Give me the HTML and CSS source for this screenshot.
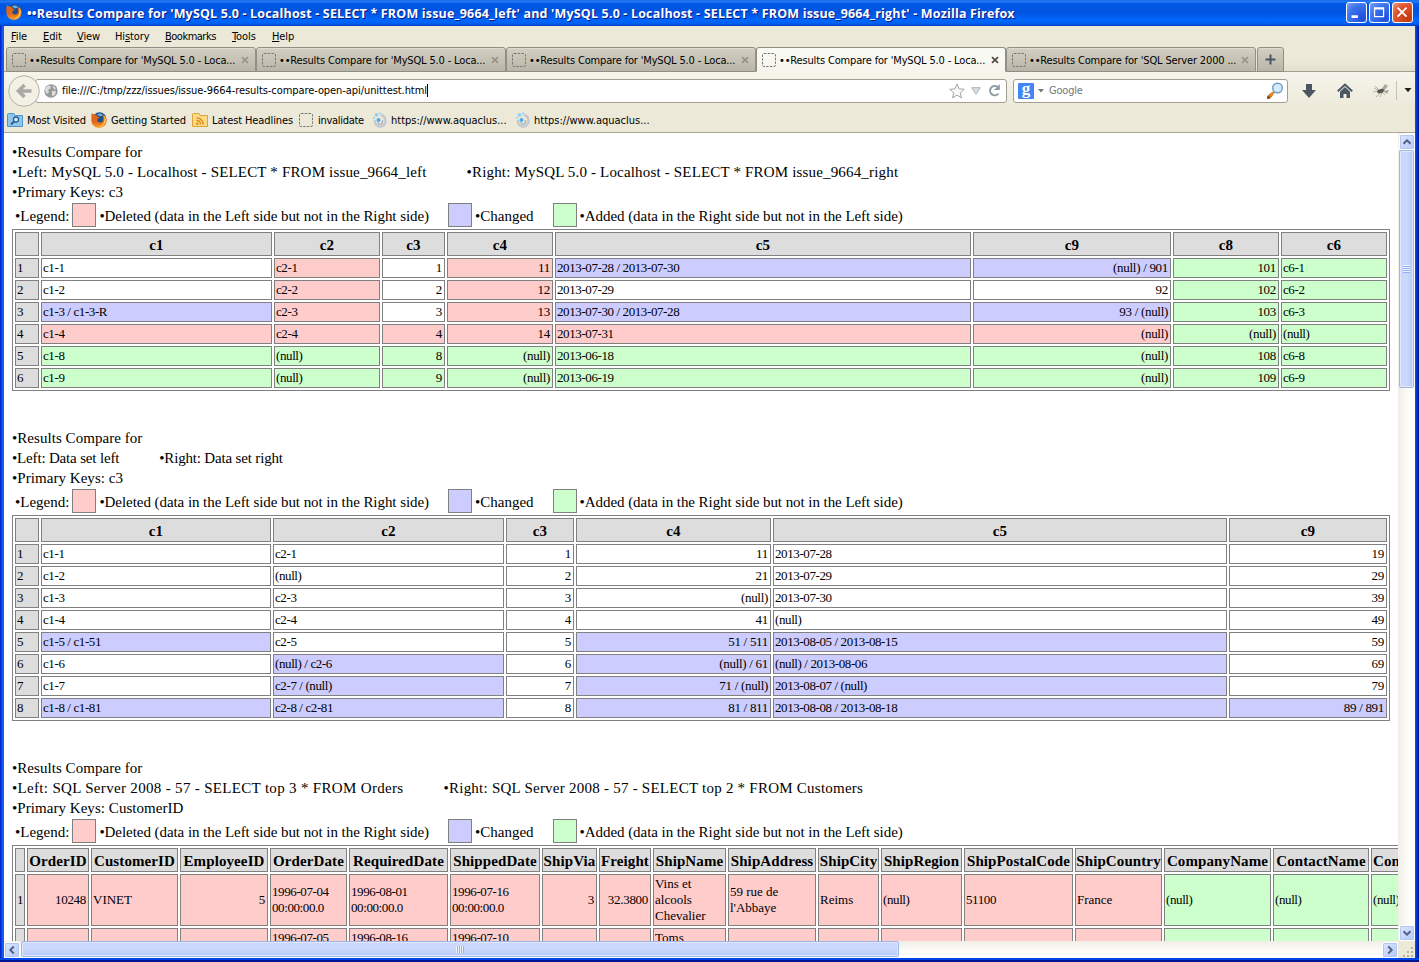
FILE: index.html
```html
<!DOCTYPE html>
<html lang="en">
<head>
<meta charset="utf-8">
<title>Results Compare</title>
<link rel="stylesheet" href="styles.css">
</head>
<body>
<svg class="defs" width="0" height="0" aria-hidden="true">
  <linearGradient id="fox" x1="0" y1="0" x2="0" y2="1"><stop offset="0" stop-color="#d9691c"/><stop offset=".6" stop-color="#e2661a"/><stop offset="1" stop-color="#f9a52c"/></linearGradient>
  <symbol id="firefox" viewBox="0 0 16 16">
    <circle cx="8.5" cy="7" r="6.8" fill="#1d4f8f"/>
    <path d="M6 2.5Q9 .5 12 3Q10 5 8 4Z" fill="#62b3e8"/>
    <path d="M.8 1Q2 2.5 4 2.4Q6 2.5 6.2 4.2L8.5 5.5Q7 7 6.2 7.5Q6 10.4 9.4 10.5Q12.6 10 12.2 6.5Q12 4 11 2.6Q16 4.500 15.700 8.800Q15 15.600 8 15.900Q1 15.300.3 8.500Q.2 3.500.8 1Z" fill="url(#fox)"/>
    <path d="M13.200 3.500Q16 7 14.200 11Q12 14.500 8 14.700Q12.500 12.500 13.300 9Q13.800 6 13.200 3.500Z" fill="#ffd34a"/>
  </symbol>
  <symbol id="blank" viewBox="0 0 14 14"><rect x=".5" y=".5" width="13" height="13" rx="1.500" fill="none" stroke="#777" stroke-dasharray="2.500 1.200"/></symbol>
  <symbol id="close" viewBox="0 0 8 8"><path d="M1 1.200L7 6.800M7 1.200L1 6.800" stroke="currentColor" stroke-width="1.700"/></symbol>
  <symbol id="aqua" viewBox="0 0 16 16">
    <path d="M9 3Q14 4.500 13.500 10Q11.500 15.500 7 14.500Q2.500 13 3 8" fill="none" stroke="#c3c9cf" stroke-width="2.400"/>
    <path d="M6 10Q6 13 9 12Q11 11 10.500 8" fill="none" stroke="#a8b2ba" stroke-width="1.300"/>
    <circle cx="6.500" cy="8" r="2" fill="#49aef0"/><circle cx="4.500" cy="3" r="1.800" fill="#8dccf5"/><circle cx="2" cy="6" r="1.200" fill="#a9d8f5"/><circle cx="8" cy="1.500" r="1" fill="#8dccf5"/>
  </symbol>
</svg>
<div class="window">
  <div class="titlebar">
    <svg class="logo"><use href="#firefox"/></svg>
    <span class="title">••Results Compare for 'MySQL 5.0 - Localhost - SELECT * FROM issue_9664_left' and 'MySQL 5.0 - Localhost - SELECT * FROM issue_9664_right' - Mozilla Firefox</span>
    <div class="controls">
      <svg class="ctl" viewBox="0 0 21 21"><path d="M5 15h7" stroke="#fff" stroke-width="3"/></svg>
      <svg class="ctl" viewBox="0 0 21 21"><path d="M5 5.500h10V15H5Z M5 6.500h10" fill="none" stroke="#fff" stroke-width="1.400"/></svg>
      <svg class="ctl exit" viewBox="0 0 21 21"><path d="M5 5L15 15M15 5L5 15" stroke="#fff" stroke-width="2"/></svg>
    </div>
  </div>
  <div class="body">
    <div class="menu"><span><u>F</u>ile</span><span><u>E</u>dit</span><span><u>V</u>iew</span><span>Hi<u>s</u>tory</span><span><u>B</u>ookmarks</span><span><u>T</u>ools</span><span><u>H</u>elp</span></div>
    <div class="tabs">
      <div class="tab"><svg class="doc"><use href="#blank"/></svg><span>••Results Compare for 'MySQL 5.0 - Loca...</span><svg class="x"><use href="#close"/></svg></div>
      <div class="tab"><svg class="doc"><use href="#blank"/></svg><span>••Results Compare for 'MySQL 5.0 - Loca...</span><svg class="x"><use href="#close"/></svg></div>
      <div class="tab"><svg class="doc"><use href="#blank"/></svg><span>••Results Compare for 'MySQL 5.0 - Loca...</span><svg class="x"><use href="#close"/></svg></div>
      <div class="tab active"><svg class="doc"><use href="#blank"/></svg><span>••Results Compare for 'MySQL 5.0 - Loca...</span><svg class="x"><use href="#close"/></svg></div>
      <div class="tab"><svg class="doc"><use href="#blank"/></svg><span>••Results Compare for 'SQL Server 2000 ...</span><svg class="x"><use href="#close"/></svg></div>
      <div class="tab plus"><svg width="11" height="11" viewBox="0 0 11 11"><path d="M5.500 .5v10M.5 5.500h10" stroke="#4b5663" stroke-width="2"/></svg></div>
    </div>
    <div class="nav">
      <svg class="back" viewBox="0 0 32 32"><circle cx="16" cy="16" r="15.300" fill="#f3f1e6" stroke="#b4b1a6"/><path d="M23.500 16H11M16.500 10L10.500 16l6 6" fill="none" stroke="#a9a9a6" stroke-width="3.600"/></svg>
      <div class="url">
        <svg width="14" height="14" viewBox="0 0 14 14"><circle cx="7" cy="7" r="6.700" fill="#999"/><path d="M1 5Q3 1 6 1.500L7 4L4 6L5 8L3 10Q1 8 1 5ZM8 2l3 1 1 3-2-1ZM8 7l4 0-1 4-3 1Z" fill="#ddd"/></svg>
        <span class="addr">file:///C:/tmp/zzz/issues/issue-9664-results-compare-open-api/unittest.html</span><i class="cursor"></i>
        <svg class="star" width="16" height="16" viewBox="0 0 16 16"><path d="M8 1l2.100 4.800 5.200.5-4 3.500 1.200 5.100L8 12.200l-4.500 2.700 1.200-5.100-4-3.500 5.200-.5Z" fill="#f8f8f8" stroke="#a5a5a5"/></svg>
        <svg class="drop" width="10" height="8" viewBox="0 0 10 8"><path d="M.7.700h8.600L5 7.200Z" fill="#d8dde2" stroke="#abb4bc"/></svg>
        <svg class="reload" width="13" height="13" viewBox="0 0 13 13"><path d="M10.500 9.500A4.700 4.700 0 1 1 9.500 2.800" fill="none" stroke="#8f9ba5" stroke-width="2"/><path d="M11.800 0v6H6Z" fill="#8f9ba5"/></svg>
      </div>
      <div class="search">
        <b class="g">g</b>
        <svg width="6" height="4" viewBox="0 0 6 4"><path d="M0 0h6L3 3.500Z" fill="#777"/></svg>
        <span>Google</span>
        <svg class="lens" width="17" height="17" viewBox="0 0 17 17"><path d="M1.500 15.500L4 13" stroke="#9c4c10" stroke-width="3.200" stroke-linecap="round"/><path d="M2.500 14.300L7 10" stroke="#e98722" stroke-width="2.600"/><circle cx="10.500" cy="6" r="4.800" fill="#d3ecfc" stroke="#6d9bc8" stroke-width="1.400"/></svg>
      </div>
      <svg class="dl" width="14" height="14" viewBox="0 0 14 14"><path d="M4 0h6v6h4L7 14 0 6h4Z" fill="#4b5663"/></svg>
      <svg class="home" width="16" height="15" viewBox="0 0 16 15"><path d="M.8 8.200L8 1.500l7.200 6.700" fill="none" stroke="#4b5663" stroke-width="2"/><path d="M3 8.700L8 4l5 4.700V15H9.500v-4h-3v4H3Z" fill="#4b5663"/></svg>
      <svg class="fly" width="16" height="14" viewBox="0 0 16 14"><path d="M1 4l4 2M0 8l5-1M3 13l4-4M7 13l2-4M12 11l-3-3M2 2l4 4" stroke="#a5a5a0" stroke-width=".8"/><path d="M8 6L12 0 15 2 11 7ZM10 7l6-1-2 4Z" fill="#a9a9a3"/><ellipse cx="7.500" cy="7" rx="3.500" ry="2" transform="rotate(-20 8 7)" fill="#55554f"/></svg>
      <svg class="more" width="8" height="5" viewBox="0 0 8 5"><path d="M.5 0h7L4 4.300Z" fill="#222"/></svg>
    </div>
    <div class="marks">
      <span><svg viewBox="0 0 16 16"><path d="M.5 2.500Q.5 1.500 1.500 1.500H7l1 2h7.500V14.500H.5Z" fill="#8fc6ec" stroke="#4d94c9"/><circle cx="9" cy="7.500" r="2.500" fill="#d9effc" stroke="#28608f" stroke-width="1.300"/><path d="M7 9.500L4 12.500" stroke="#28608f" stroke-width="1.800"/></svg>Most Visited</span>
      <span><svg viewBox="0 0 16 16"><use href="#firefox"/></svg>Getting Started</span>
      <span><svg viewBox="0 0 16 16"><path d="M.5 2.500Q.5 1.500 1.500 1.500H7l1 2h7.500V14.500H.5Z" fill="#fbdc85" stroke="#dba43a"/><path d="M4.500 8.500Q8.500 8.500 8.500 12.500M4.500 6Q11 6 11 12.500" fill="none" stroke="#e08a1b" stroke-width="1.400"/><circle cx="5.300" cy="11.700" r="1.200" fill="#e08a1b"/></svg>Latest Headlines</span>
      <span><svg viewBox="-1 -1 16 16"><use href="#blank" width="14" height="14"/></svg>invalidate</span>
      <span><svg viewBox="0 0 16 16"><use href="#aqua"/></svg>https://www.aquaclus...</span>
      <span><svg viewBox="0 0 16 16"><use href="#aqua"/></svg>https://www.aquaclus...</span>
    </div>
    <div class="view">
      <main class="page">
        <section>
          <p>•Results Compare for</p>
          <p class="query"><span class="left">•Left: MySQL 5.0 - Localhost - SELECT * FROM issue_9664_left</span>•Right: MySQL 5.0 - Localhost - SELECT * FROM issue_9664_right</p>
          <p>•Primary Keys: c3</p>
          <div class="legend"><span>•Legend:</span><i class="d"></i><span class="long">•Deleted (data in the Left side but not in the Right side)</span><i class="c"></i><span>•Changed</span><i class="a"></i><span class="long">•Added (data in the Right side but not in the Left side)</span></div>
          <table class="t1">
            <colgroup><col><col><col><col><col><col><col><col><col></colgroup>
            <tr><th><th>c1<th>c2<th>c3<th>c4<th>c5<th>c9<th>c8<th>c6
            <tr><th>1<td>c1-1<td class="d">c2-1<td class="n">1<td class="n d">11<td class="c">2013-07-28 / 2013-07-30<td class="n c">(null) / 901<td class="n a">101<td class="a">c6-1
            <tr><th>2<td>c1-2<td class="d">c2-2<td class="n">2<td class="n d">12<td>2013-07-29<td class="n">92<td class="n a">102<td class="a">c6-2
            <tr><th>3<td class="c">c1-3 / c1-3-R<td class="d">c2-3<td class="n">3<td class="n d">13<td class="c">2013-07-30 / 2013-07-28<td class="n c">93 / (null)<td class="n a">103<td class="a">c6-3
            <tr><th>4<td class="d">c1-4<td class="d">c2-4<td class="n d">4<td class="n d">14<td class="d">2013-07-31<td class="n d">(null)<td class="n a">(null)<td class="a">(null)
            <tr class="a"><th>5<td>c1-8<td>(null)<td class="n">8<td class="n">(null)<td>2013-06-18<td class="n">(null)<td class="n">108<td>c6-8
            <tr class="a"><th>6<td>c1-9<td>(null)<td class="n">9<td class="n">(null)<td>2013-06-19<td class="n">(null)<td class="n">109<td>c6-9
          </table>
        </section>
        <section>
          <p>•Results Compare for</p>
          <p class="query short"><span class="left">•Left: Data set left</span>•Right: Data set right</p>
          <p>•Primary Keys: c3</p>
          <div class="legend"><span>•Legend:</span><i class="d"></i><span class="long">•Deleted (data in the Left side but not in the Right side)</span><i class="c"></i><span>•Changed</span><i class="a"></i><span class="long">•Added (data in the Right side but not in the Left side)</span></div>
          <table class="t2">
            <colgroup><col><col><col><col><col><col><col></colgroup>
            <tr><th><th>c1<th>c2<th>c3<th>c4<th>c5<th>c9
            <tr><th>1<td>c1-1<td>c2-1<td class="n">1<td class="n">11<td>2013-07-28<td class="n">19
            <tr><th>2<td>c1-2<td>(null)<td class="n">2<td class="n">21<td>2013-07-29<td class="n">29
            <tr><th>3<td>c1-3<td>c2-3<td class="n">3<td class="n">(null)<td>2013-07-30<td class="n">39
            <tr><th>4<td>c1-4<td>c2-4<td class="n">4<td class="n">41<td>(null)<td class="n">49
            <tr><th>5<td class="c">c1-5 / c1-51<td>c2-5<td class="n">5<td class="n c">51 / 511<td class="c">2013-08-05 / 2013-08-15<td class="n">59
            <tr><th>6<td>c1-6<td class="c">(null) / c2-6<td class="n">6<td class="n c">(null) / 61<td class="c">(null) / 2013-08-06<td class="n">69
            <tr><th>7<td>c1-7<td class="c">c2-7 / (null)<td class="n">7<td class="n c">71 / (null)<td class="c">2013-08-07 / (null)<td class="n">79
            <tr><th>8<td class="c">c1-8 / c1-81<td class="c">c2-8 / c2-81<td class="n">8<td class="n c">81 / 811<td class="c">2013-08-08 / 2013-08-18<td class="n c">89 / 891
          </table>
        </section>
        <section>
          <p>•Results Compare for</p>
          <p class="query wide"><span class="left">•Left: SQL Server 2008 - 57 - SELECT top 3 * FROM Orders</span>•Right: SQL Server 2008 - 57 - SELECT top 2 * FROM Customers</p>
          <p>•Primary Keys: CustomerID</p>
          <div class="legend"><span>•Legend:</span><i class="d"></i><span class="long">•Deleted (data in the Left side but not in the Right side)</span><i class="c"></i><span>•Changed</span><i class="a"></i><span class="long">•Added (data in the Right side but not in the Left side)</span></div>
          <table class="t3">
            <colgroup><col><col><col><col><col><col><col><col><col><col><col><col><col><col><col><col><col><col></colgroup>
            <tr><th><th>OrderID<th>CustomerID<th>EmployeeID<th>OrderDate<th>RequiredDate<th>ShippedDate<th>ShipVia<th>Freight<th>ShipName<th>ShipAddress<th>ShipCity<th>ShipRegion<th>ShipPostalCode<th>ShipCountry<th>CompanyName<th>ContactName<th class="cut">Con
            <tr class="d"><th>1<td class="n">10248<td class="w">VINET<td class="n">5<td>1996-07-04<br>00:00:00.0<td>1996-08-01<br>00:00:00.0<td>1996-07-16<br>00:00:00.0<td class="n">3<td class="n">32.3800<td class="w">Vins et<br>alcools<br>Chevalier<td class="w">59 rue de<br>l'Abbaye<td class="w">Reims<td>(null)<td>51100<td class="w">France<td class="a">(null)<td class="a">(null)<td class="a">(null)
            <tr class="d next"><th><td><td><td><td>1996-07-05<td>1996-08-16<td>1996-07-10<td><td><td class="w">Toms<td><td><td><td><td><td class="a"><td class="a"><td class="a">
          </table>
        </section>
      </main>
      <div class="vbar">
        <svg class="sb" viewBox="0 0 16 16"><path d="M4 10L8 6l4 4" fill="none" stroke="#4d6185" stroke-width="2.200"/></svg>
        <div class="thumb"><i></i></div>
        <svg class="sb end" viewBox="0 0 16 16"><path d="M4 6l4 4 4-4" fill="none" stroke="#4d6185" stroke-width="2.200"/></svg>
      </div>
    </div>
    <div class="hbar">
      <svg class="sb" viewBox="0 0 16 16"><path d="M10 4L6 8l4 4" fill="none" stroke="#4d6185" stroke-width="2.200"/></svg>
      <div class="thumb"><i></i></div>
      <svg class="sb end" viewBox="0 0 16 16"><path d="M6 4l4 4-4 4" fill="none" stroke="#4d6185" stroke-width="2.200"/></svg>
      <svg class="grip" viewBox="0 0 17 17"><path d="M13 6h2v2h-2zM9 10h2v2H9zM13 10h2v2h-2zM5 14h2v2H5zM9 14h2v2H9zM13 14h2v2h-2z" fill="#b8b4a2"/></svg>
    </div>
  </div>
</div>
</body>
</html>
```
FILE: styles.css
```css
* { box-sizing: border-box; }
body { margin: 0; overflow: hidden; font: 11px/14px "DejaVu Sans Condensed", "DejaVu Sans", sans-serif; color: #000; }
svg { flex: none; display: block; }
.defs { position: absolute; }
.window { width: 1419px; height: 962px; display: flex; flex-direction: column; background: linear-gradient(90deg, #0019cf 0, #0831d9 1px, #166aee 3px, #0855dd 4px, #0855dd 1415px, #0046e6 1416px, #001da0 1418px); padding-bottom: 4px; box-shadow: inset 0 -2px #001590, inset 0 -4px #0144e8; }
.titlebar { height: 26px; flex: none; display: flex; align-items: center; padding: 0 6px; background: linear-gradient(#0f5fdc 0, #2a7ff5 1px, #0058e6 4px, #0053e0 12px, #0066fb 20px, #0063f5 23px, #0041c4 26px); }
.logo { width: 16px; height: 16px; margin: -3px 5px 0 0; }
.title { font: bold 12.5px/16px "Open Sans", sans-serif; letter-spacing: .17px; padding-top: 1px; color: #fff; text-shadow: 1px 1px #0a1883; white-space: nowrap; }
.controls { display: flex; gap: 2px; margin-left: auto; margin-top: -1px; }
.ctl { width: 21px; height: 21px; border: 1px solid #fff; border-radius: 3px; background: radial-gradient(circle at 80% 80%, #1f4fdc, #3a72ec 60%, #7ea4f4); }
.ctl.exit { background: radial-gradient(circle at 80% 80%, #c43a10, #e0532f 60%, #f09a80); }
.body { flex: 1; min-height: 0; margin: 0 4px; display: flex; flex-direction: column; background: #ece9d8; }
.menu { height: 21px; flex: none; display: flex; align-items: center; padding-left: 7px; letter-spacing: -.1px; }
.menu u { text-underline-offset: 1px; }
.menu span:nth-child(1) { width: 32px; }
.menu span:nth-child(2) { width: 34px; }
.menu span:nth-child(3) { width: 38px; }
.menu span:nth-child(4) { width: 50px; }
.menu span:nth-child(5) { width: 67px; letter-spacing: -.5px; }
.menu span:nth-child(6) { width: 40px; }
.tabs { height: 25px; flex: none; display: flex; padding-left: 2px; border-bottom: 1px solid #a29f92; background: linear-gradient(#ece9d8 60%, #e2dfce); }
.tab { width: 250px; height: 25px; display: flex; align-items: center; padding: 1px 6px 0 5px; border: 1px solid #918f84; border-radius: 3px 3px 0 0; background: linear-gradient(#d3d0c2, #b9b6a9); box-shadow: inset 0 1px #dedbd0; white-space: nowrap; letter-spacing: -.16px; }
.tab span { padding-top: 2px; }
.tab.active { background: linear-gradient(#fafaf5, #f6f5ec); border-bottom-color: #f6f5ec; box-shadow: none; }
.tab.plus { width: 27px; margin-left: 1px; padding: 0; justify-content: center; }
.doc { width: 14px; height: 14px; margin-right: 3px; }
.x { width: 8px; height: 8px; margin-left: auto; color: #969488; }
.active .x { color: #4c4c48; }
.nav { height: 37px; flex: none; display: flex; align-items: center; padding-left: 4px; background: linear-gradient(#f6f5ec, #ece9d8); }
.back { width: 32px; height: 32px; z-index: 1; }
.url, .search { height: 24px; display: flex; align-items: center; background: #fff; border: 1px solid #a29f92; border-radius: 3px; }
.url { width: 972px; margin-left: -5px; padding: 0 5px 0 8px; }
.addr { margin-left: 4px; white-space: nowrap; letter-spacing: -.07px; }
.cursor { width: 1px; height: 13px; background: #000; }
.star { margin-left: auto; }
.drop { margin: 0 7px 0 6px; }
.search { width: 275px; margin-left: 6px; padding: 0 3px 0 4px; color: #777; }
.g { width: 16px; height: 16px; margin-right: 4px; background: #4285f4; color: #fff; border-radius: 1px; font: bold 17px/11px "Liberation Serif", serif; text-align: center; }
.search span { margin-left: 5px; padding-top: 1px; letter-spacing: -.2px; }
.lens { margin-left: auto; }
.dl { margin-left: 14px; }
.home { margin-left: 21px; }
.fly { margin-left: 20px; }
.more { margin-left: 7px; box-sizing: content-box; padding: 7px 0 7px 7px; border-left: 1px solid #c5c2b2; }
.marks { height: 24px; flex: none; display: flex; padding: 1px 0 0 3px; border-bottom: 1px solid #aca899; letter-spacing: -.1px; }
.marks span { display: flex; align-items: center; white-space: nowrap; }
.marks svg { width: 16px; height: 16px; margin: -2px 4px 0 0; }
.marks span:nth-child(1) { width: 84px; }
.marks span:nth-child(2) { width: 101px; }
.marks span:nth-child(3) { width: 106px; }
.marks span:nth-child(4) { width: 74px; letter-spacing: -.3px; }
.marks span:nth-child(5) { width: 143px; }
.marks span:nth-child(n+5) { letter-spacing: 0; }
.marks span:nth-child(n+5) svg { margin-right: 3px; }
.view { height: 808px; flex: none; display: flex; background: #fff; }
.page { width: 1394px; height: 808px; overflow: hidden; padding: 9px 0 0 8px; font: 15px/20px "Liberation Serif", serif; white-space: nowrap; }
section { margin-bottom: 37px; }
p { margin: 0; height: 20px; letter-spacing: .05px; }
.left { margin-right: 40px; }
.query { letter-spacing: .17px; }
.query.short { letter-spacing: -.17px; }
.query.wide { letter-spacing: .24px; }
.wide .left { letter-spacing: .32px; }
.legend { height: 27px; display: flex; align-items: center; padding: 0 0 1px 3px; }
.legend span { padding-top: 1px; }
.legend .long { letter-spacing: -.06px; }
.legend i { width: 24px; height: 24px; border: 1px solid #808080; margin: 0 3px; }
.legend i.c, .legend i.a { margin-left: 19px; }
table { table-layout: fixed; border: 1px solid #808080; border-spacing: 2px; width: 1378px; }
.t3 { width: 1462px; }
th, td { border: 1px solid #808080; padding: 1px; overflow: hidden; }
th { height: 24px; padding: 1px 0 0; background: #ddd; font-weight: bold; text-align: center; letter-spacing: .1px; }
td, tr + tr th { height: 20px; padding: 1px; font-size: 13px; line-height: 16px; font-weight: normal; text-align: left; letter-spacing: -.4px; }
td.w { letter-spacing: 0; }
td.n { padding-right: 2px; text-align: right; letter-spacing: -.3px; }
th.cut { text-align: left; padding-left: 1px; }
.next td { height: 36px; vertical-align: top; }
.d, tr.d td { background: #fcc; }
.c { background: #ccf; }
.a, tr.a td, tr.d td.a { background: #cfc; }
tr.a, tr.d { background: none; }
.t1 col:nth-child(1), .t2 col:nth-child(1) { width: 24px; }
.t1 col:nth-child(2) { width: 231px; }
.t1 col:nth-child(3), .t1 col:nth-child(5), .t1 col:nth-child(8), .t1 col:nth-child(9) { width: 106px; }
.t1 col:nth-child(4) { width: 63px; }
.t1 col:nth-child(6) { width: 416px; }
.t1 col:nth-child(7) { width: 198px; }
.t2 col:nth-child(2) { width: 230px; }
.t2 col:nth-child(3) { width: 231px; }
.t2 col:nth-child(4) { width: 68px; }
.t2 col:nth-child(5) { width: 195px; }
.t2 col:nth-child(6) { width: 454px; }
.t2 col:nth-child(7) { width: 158px; }
.t3 col:nth-child(1) { width: 10px; }
.t3 col:nth-child(2) { width: 62px; }
.t3 col:nth-child(3) { width: 87px; }
.t3 col:nth-child(4) { width: 88px; }
.t3 col:nth-child(5) { width: 77px; }
.t3 col:nth-child(6) { width: 99px; }
.t3 col:nth-child(7) { width: 90px; }
.t3 col:nth-child(8) { width: 55px; }
.t3 col:nth-child(9) { width: 52px; }
.t3 col:nth-child(10) { width: 73px; }
.t3 col:nth-child(11) { width: 88px; }
.t3 col:nth-child(12) { width: 61px; }
.t3 col:nth-child(13) { width: 81px; }
.t3 col:nth-child(14) { width: 109px; }
.t3 col:nth-child(15) { width: 87px; }
.t3 col:nth-child(16) { width: 107px; }
.t3 col:nth-child(17) { width: 96px; }
.t3 col:nth-child(18) { width: 100px; }
.vbar { width: 17px; display: flex; flex-direction: column; background: linear-gradient(90deg, #f0eee6, #fefefb 70%); }
.hbar { height: 17px; flex: none; display: flex; background: linear-gradient(#f0eee6, #fefefb 70%); }
.sb { width: 16px; height: 16px; margin: 1px 0 0 1px; border: 1px solid #fff; border-radius: 2px; background: linear-gradient(135deg, #dbe6ff, #b5c9f8); box-shadow: inset 0 0 0 1px #b3c6f0; }
.sb.end { margin-top: auto; }
.hbar .sb { margin: 1px 0 0; }
.hbar .sb.end { margin-left: auto; }
.thumb { display: flex; align-items: center; justify-content: center; border: 1px solid #9fb5e6; border-radius: 2px; }
.vbar .thumb { width: 15px; height: 238px; margin: 0 1px; background: linear-gradient(90deg, #cad8fc 50%, #b5c9f7); box-shadow: inset 0 0 0 1px #dfe8ff; }
.hbar .thumb { width: 878px; height: 16px; margin: 0 0 0 1px; background: linear-gradient(#cad8fc 50%, #b5c9f7); box-shadow: inset 0 0 0 1px #dfe8ff; }
.vbar i { width: 7px; height: 8px; background: repeating-linear-gradient(#eef4fe 0 1px, #8cb0f8 1px 2px); }
.hbar i { width: 8px; height: 7px; background: repeating-linear-gradient(90deg, #eef4fe 0 1px, #8cb0f8 1px 2px); }
.grip { width: 17px; height: 17px; background: #ece9d8; }
```
